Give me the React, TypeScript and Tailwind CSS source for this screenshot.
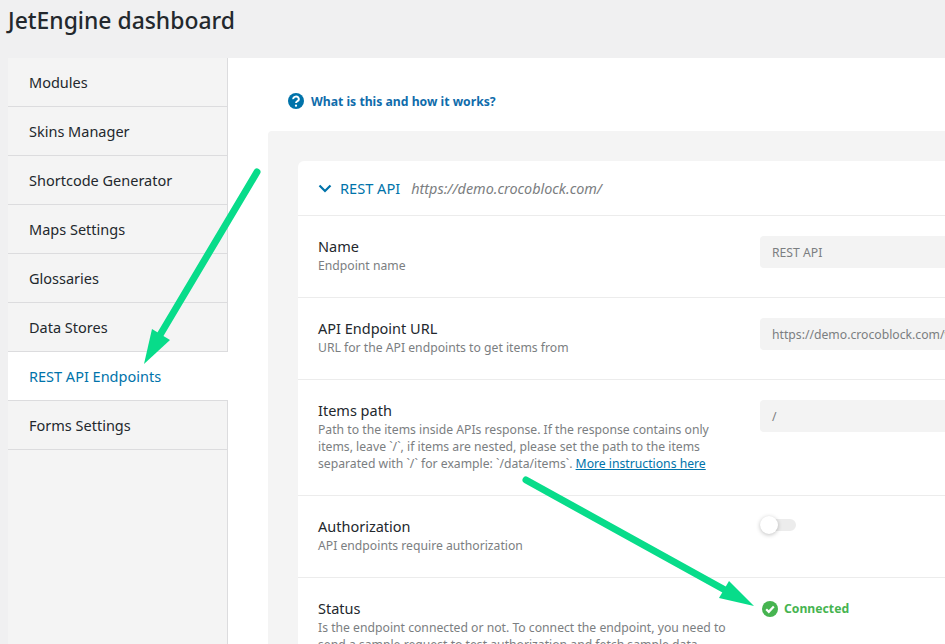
import React from 'react';

const font = { fontFamily: '"Noto Sans", "Open Sans", sans-serif' };

const menu = [
  'Modules',
  'Skins Manager',
  'Shortcode Generator',
  'Maps Settings',
  'Glossaries',
  'Data Stores',
  'REST API Endpoints',
  'Forms Settings',
];

const Row: React.FC<{ title: string; className?: string; children: React.ReactNode; control: React.ReactNode }> = ({
  title,
  className,
  children,
  control,
}) => (
  <div className={`flex shrink-0 border-b border-[#ececec] pl-5 ${className ?? ''}`}>
    <div className="w-[442px] shrink-0 pr-7 pt-5">
      <div className="text-[14.5px] leading-[21px] text-[#23282d]">{title}</div>
      <div className="text-[12.2px] leading-[17px] text-[#7b7e81]">{children}</div>
    </div>
    <div className="min-w-0 flex-1 pt-5">{control}</div>
  </div>
);

const Field: React.FC<{ value: string }> = ({ value }) => (
  <div className="flex h-8 w-[300px] items-center overflow-hidden whitespace-nowrap rounded bg-[#f3f3f3] px-3 pt-[3px] text-[12.2px] text-[#7b7e81]">
    {value}
  </div>
);

function App() {
  return (
    <div className="relative flex h-[644px] w-[945px] flex-col overflow-hidden bg-[#f0f0f1]" style={font}>
      <h1 className="h-[58px] shrink-0 pl-2 pt-[5px] text-[22.9px] font-medium leading-[32px] text-[#23282d]">
        JetEngine dashboard
      </h1>

      <div className="flex min-h-0 flex-1 pl-2">
        <div className="w-[220px] shrink-0 border-r border-[#dcdcde] bg-[#f4f4f4]">
          {menu.map((item) => {
            const active = item === 'REST API Endpoints';
            return (
              <div
                key={item}
                className={`flex h-[49px] items-center border-b border-[#dcdcde] pl-[21px] pt-[2px] text-[14.5px] ${
                  active ? 'relative -mr-px bg-white text-[#0073aa]' : 'text-[#23282d]'
                }`}
              >
                {item}
              </div>
            );
          })}
        </div>

        <div className="flex min-w-0 flex-1 flex-col bg-white pl-10">
          <div className="flex h-[73px] shrink-0 items-center gap-[7px] pl-5 pt-[13px]">
            <svg viewBox="0 0 16 16" className="h-4 w-4 shrink-0">
              <circle cx="8" cy="8" r="8" fill="#0073aa" />
              <path d="M5.2 6.1a2.8 2.5 0 1 1 4.2 2.1c-.9.5-1.4.9-1.4 1.9" fill="none" stroke="#fff" strokeWidth="1.9" />
              <circle cx="8" cy="12.7" r="1.15" fill="#fff" />
            </svg>
            <span className="whitespace-nowrap pt-[2px] text-[12.2px] font-bold text-[#0f6cab]">What is this and how it works?</span>
          </div>

          <div className="min-h-0 flex-1 overflow-hidden rounded-tl bg-[#f4f4f4] pl-[30px] pt-[30px]">
            <div className="flex h-[600px] flex-col rounded-tl-md bg-white">
              <div className="flex h-[55px] shrink-0 items-center border-b border-[#ececec] pl-5">
                <svg viewBox="0 0 14 9" className="h-[9px] w-[14px]">
                  <path d="M1.5 1.5L7 7l5.5-5.5" fill="none" stroke="#0073aa" strokeWidth="2.2" />
                </svg>
                <span className="ml-2 pt-[2px] text-[14.6px] text-[#0073aa]">REST API</span>
                <span className="ml-[11px] pt-[2px] text-[14.4px] italic text-[#7b7e81]">https://demo.crocoblock.com/</span>
              </div>

              <Row title="Name" className="h-[82px]" control={<Field value="REST API" />}>
                Endpoint name
              </Row>
              <Row title="API Endpoint URL" className="h-[82px]" control={<Field value="https://demo.crocoblock.com/wp-json/" />}>
                URL for the API endpoints to get items from
              </Row>
              <Row title="Items path" className="h-[116px]" control={<Field value="/" />}>
                Path to the items inside APIs response. If the response contains only items, leave `/`, if items are nested,
                please set the path to the items separated with `/` for example: `/data/items`.{' '}
                <a className="text-[#0073aa] underline">More instructions here</a>
              </Row>
              <Row
                title="Authorization"
                className="h-[82px]"
                control={
                  <div className="relative mt-[3px] h-3 w-9 rounded-full bg-[#ececec]">
                    <div className="absolute left-0 -top-[3px] h-[18px] w-[18px] rounded-full bg-white shadow-[0_1px_4px_rgba(0,0,0,0.25)]" />
                  </div>
                }
              >
                API endpoints require authorization
              </Row>
              <Row
                title="Status"
                className="h-[100px]"
                control={
                  <div className="flex items-center gap-[6px] pl-[2px] pt-[2px] text-[12.2px] font-bold text-[#46b450]">
                    <svg viewBox="0 0 16 16" className="h-4 w-4">
                      <circle cx="8" cy="8" r="8" fill="#46b450" />
                      <path d="M4.2 8.2l2.6 2.6 5-5.4" fill="none" stroke="#fff" strokeWidth="2.2" />
                    </svg>
                    Connected
                  </div>
                }
              >
                Is the endpoint connected or not. To connect the endpoint, you need to send a sample request to test
                authorization and fetch sample data
              </Row>
            </div>
          </div>
        </div>
      </div>

      {/* annotation arrows */}
      <svg className="pointer-events-none absolute left-0 top-0 h-[644px] w-[945px]" viewBox="0 0 945 644">
        <g fill="#08dc8a" stroke="#08dc8a" strokeLinecap="round">
          <line x1="257" y1="172" x2="160" y2="335" strokeWidth="7" />
          <polygon points="144,364 152,329 170,340" strokeWidth="0" />
          <line x1="526" y1="480" x2="725" y2="590" strokeWidth="7" />
          <polygon points="754,606 719,598 729,581" strokeWidth="0" />
        </g>
      </svg>
    </div>
  );
}

export default App;
